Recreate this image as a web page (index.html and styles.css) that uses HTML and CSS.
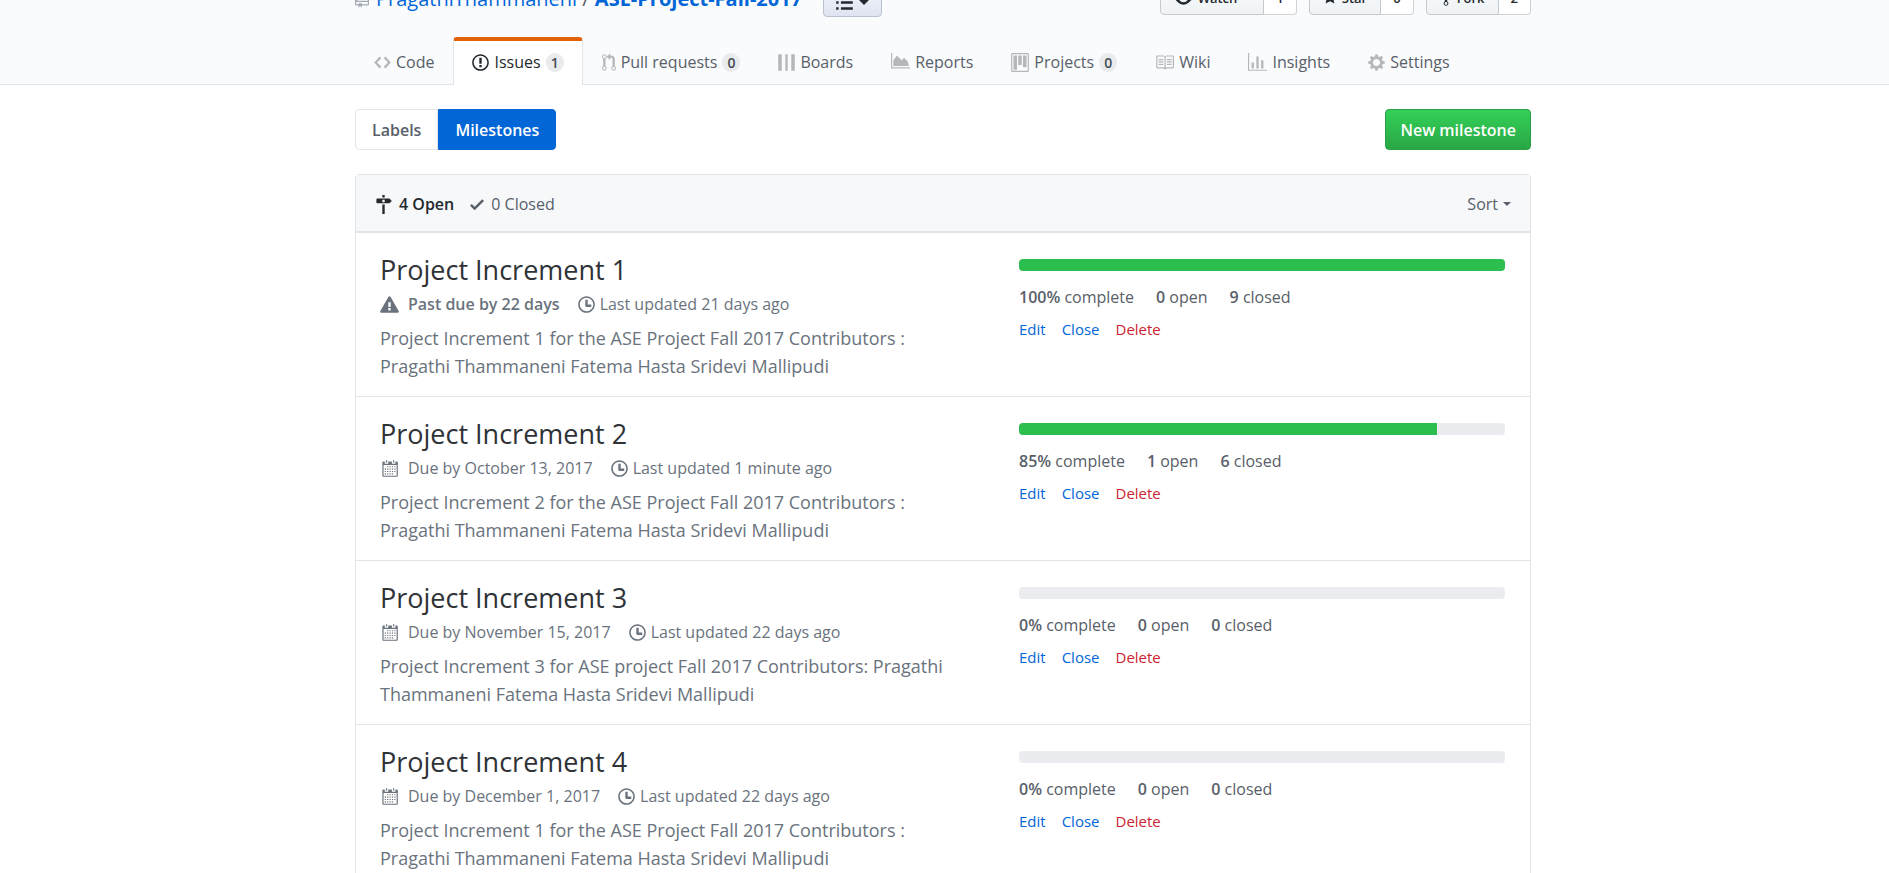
FILE: index.html
```html
<!DOCTYPE html>
<html lang="en">
<head>
<meta charset="utf-8">
<title>Milestones - ASE-Project-Fall-2017</title>
<link rel="stylesheet" href="styles.css">
</head>
<body>
<svg class="sprite" aria-hidden="true">
  <symbol id="repo" viewBox="0 0 12 16"><path fill-rule="evenodd" d="M4 9H3V8h1v1zm0-3H3v1h1V6zm0-2H3v1h1V4zm0-2H3v1h1V2zm8-1v12c0 .55-.45 1-1 1H6v2l-1.500-1.500L3 16v-2H1c-.55 0-1-.45-1-1V1c0-.55.45-1 1-1h10c.55 0 1 .45 1 1zm-1 10H1v2h2v-1h3v1h5v-2zm0-10H2v9h9V1z"/></symbol>
  <symbol id="eye" viewBox="0 0 16 16"><path fill-rule="evenodd" d="M8.060 2C3 2 0 8 0 8s3 6 8.060 6C13 14 16 8 16 8s-3-6-7.940-6zM8 12c-2.200 0-4-1.780-4-4 0-2.200 1.800-4 4-4 2.220 0 4 1.800 4 4 0 2.220-1.780 4-4 4zm2-4c0 1.110-.89 2-2 2-1.110 0-2-.89-2-2 0-1.110.89-2 2-2 1.110 0 2 .89 2 2z"/></symbol>
  <symbol id="star" viewBox="0 0 14 16"><path d="M14 6l-4.900-.64L7 1 4.900 5.360 0 6l3.600 3.260L2.670 14 7 11.670 11.330 14l-.93-4.740L14 6z"/></symbol>
  <symbol id="fork" viewBox="0 0 10 16"><path fill-rule="evenodd" d="M8 1a1.993 1.993 0 0 0-1 3.720V6L5 8 3 6V4.720A1.993 1.993 0 0 0 2 1a1.993 1.993 0 0 0-1 3.720V6.500l3 3v1.780A1.993 1.993 0 0 0 5 15a1.993 1.993 0 0 0 1-3.720V9.500l3-3V4.720A1.993 1.993 0 0 0 8 1zM2 4.200C1.340 4.200.8 3.650.8 3c0-.65.55-1.200 1.200-1.200.65 0 1.200.55 1.200 1.200 0 .65-.55 1.200-1.200 1.200zm3 10c-.66 0-1.200-.55-1.200-1.200 0-.65.55-1.200 1.200-1.200.65 0 1.200.55 1.200 1.200 0 .65-.55 1.200-1.200 1.200zm3-10c-.66 0-1.200-.55-1.200-1.200 0-.65.55-1.200 1.200-1.200.65 0 1.200.55 1.200 1.200 0 .65-.55 1.200-1.200 1.200z"/></symbol>
  <symbol id="list" viewBox="0 0 14 16"><path d="M0 2h2v2H0zm4 0h10v2H4zM0 7h2v2H0zm4 0h10v2H4zM0 12h2v2H0zm4 0h10v2H4z"/></symbol>
  <symbol id="code" viewBox="0 0 14 16"><path d="M9.500 3L8 4.500 11.500 8 8 11.500 9.500 13 14 8 9.500 3zm-5 0L0 8l4.500 5L6 11.500 2.500 8 6 4.500 4.500 3z"/></symbol>
  <symbol id="issue" viewBox="0 0 14 16"><path fill-rule="evenodd" d="M7 2.300c3.140 0 5.700 2.560 5.700 5.700s-2.560 5.700-5.700 5.700A5.710 5.710 0 0 1 1.300 8c0-3.140 2.560-5.700 5.700-5.700zM7 1C3.140 1 0 4.140 0 8s3.140 7 7 7 7-3.140 7-7-3.140-7-7-7zm1 3H6v5h2V4zm0 6H6v2h2v-2z"/></symbol>
  <symbol id="pull" viewBox="0 0 12 16"><path fill-rule="evenodd" d="M11 11.280V5c-.03-.78-.34-1.470-.94-2.060C9.460 2.350 8.780 2.030 8 2H7V0L4 3l3 3V4h1c.27.02.48.11.69.31.21.2.3.42.31.69v6.280A1.993 1.993 0 0 0 10 15a1.993 1.993 0 0 0 1-3.720zm-1 2.920c-.66 0-1.200-.55-1.200-1.200 0-.65.55-1.200 1.200-1.200.65 0 1.200.55 1.200 1.200 0 .65-.55 1.200-1.200 1.200zM4 3c0-1.110-.89-2-2-2a1.993 1.993 0 0 0-1 3.720v6.560A1.993 1.993 0 0 0 2 15a1.993 1.993 0 0 0 1-3.720V4.720c.59-.34 1-.98 1-1.720zm-.8 10c0 .66-.55 1.200-1.200 1.200-.65 0-1.200-.55-1.200-1.200 0-.65.55-1.200 1.200-1.200.65 0 1.200.55 1.200 1.200zM2 4.200C1.340 4.200.8 3.650.8 3c0-.65.55-1.200 1.200-1.200.65 0 1.200.55 1.200 1.200 0 .65-.55 1.200-1.200 1.200z"/></symbol>
  <symbol id="boards" viewBox="0 0 14 16"><path d="M0 1h3v14H0zm6 0h2v14H6zm5 0h3v14h-3z"/></symbol>
  <symbol id="reports" viewBox="0 0 16 16"><path d="M0 0h1v12h15v1H0z"/><path d="M2 11V6l3-4 4 4 2-2 3 3 1 4z"/></symbol>
  <symbol id="project" viewBox="0 0 15 16"><path fill-rule="evenodd" d="M10 12h3V2h-3v10zm-4-2h3V2H6v8zm-4 4h3V2H2v12zm-1 1h13V1H1v14zM14 0H1a1 1 0 0 0-1 1v14a1 1 0 0 0 1 1h13a1 1 0 0 0 1-1V1a1 1 0 0 0-1-1z"/></symbol>
  <symbol id="book" viewBox="0 0 16 16"><path fill-rule="evenodd" d="M3 5h4v1H3V5zm0 3h4V7H3v1zm0 2h4V9H3v1zm11-5h-4v1h4V5zm0 2h-4v1h4V7zm0 2h-4v1h4V9zm2-6v9c0 .55-.45 1-1 1H9.500l-1 1-1-1H2c-.55 0-1-.45-1-1V3c0-.55.45-1 1-1h5.500l1 1 1-1H15c.55 0 1 .45 1 1zm-8 .5L7.500 3H2v9h6V3.500zm7-.5H9.500l-.5.5V12h6V3z"/></symbol>
  <symbol id="graph" viewBox="0 0 16 16"><path d="M16 14v1H0V0h1v14h15zM5 13H3V8h2v5zm4 0H7V3h2v10zm4 0h-2V6h2v7z"/></symbol>
  <symbol id="gear" viewBox="0 0 14 16"><path fill-rule="evenodd" d="M14 8.770v-1.600l-1.940-.64-.45-1.090.88-1.840-1.130-1.130-1.810.91-1.090-.45-.69-1.920h-1.600l-.63 1.940-1.110.45-1.840-.88-1.130 1.130.91 1.810-.45 1.090L0 7.230v1.590l1.940.64.45 1.090-.88 1.840 1.130 1.130 1.810-.91 1.090.45.69 1.920h1.590l.63-1.940 1.110-.45 1.840.88 1.130-1.130-.92-1.810.47-1.090L14 8.750v.02zM7 11c-1.660 0-3-1.340-3-3s1.340-3 3-3 3 1.340 3 3-1.340 3-3 3z"/></symbol>
  <symbol id="milestone" viewBox="0 0 14 16"><path fill-rule="evenodd" d="M8 2H6V0h2v2zm4 5H2c-.55 0-1-.45-1-1V4c0-.55.45-1 1-1h10l2 2-2 2zM8 4H6v2h2V4zM6 16h2V8H6v8z"/></symbol>
  <symbol id="check" viewBox="0 0 12 16"><path d="M12 5l-8 8-4-4 1.500-1.500L4 10l6.500-6.500L12 5z"/></symbol>
  <symbol id="alert" viewBox="0 0 16 16"><path fill-rule="evenodd" d="M8.865 1.520c-.18-.31-.51-.5-.87-.5s-.69.19-.87.5L.275 13.500c-.18.31-.18.69 0 1 .19.31.52.5.87.5h13.700c.36 0 .69-.19.86-.5.17-.31.18-.69.01-1L8.865 1.520zM8.995 13h-2v-2h2v2zm0-3h-2V6h2v4z"/></symbol>
  <symbol id="clock" viewBox="0 0 14 16"><path fill-rule="evenodd" d="M8 8h3v2H7c-.55 0-1-.45-1-1V4h2v4zM7 2.300c3.140 0 5.700 2.560 5.700 5.700s-2.560 5.700-5.700 5.700A5.710 5.710 0 0 1 1.300 8c0-3.140 2.560-5.700 5.700-5.700zM7 1C3.140 1 0 4.140 0 8s3.140 7 7 7 7-3.140 7-7-3.140-7-7-7z"/></symbol>
  <symbol id="calendar" viewBox="0 0 14 16"><path fill-rule="evenodd" d="M13 2h-1v1.500c0 .28-.22.5-.5.5h-2c-.28 0-.5-.22-.5-.5V2H6v1.500c0 .28-.22.5-.5.5h-2c-.28 0-.5-.22-.5-.5V2H2c-.55 0-1 .45-1 1v11c0 .55.45 1 1 1h11c.55 0 1-.45 1-1V3c0-.55-.45-1-1-1zm0 12H2V5h11v9zM5 3H4V1h1v2zm6 0h-1V1h1v2zM6 7H5V6h1v1zm2 0H7V6h1v1zm2 0H9V6h1v1zm2 0h-1V6h1v1zM4 9H3V8h1v1zm2 0H5V8h1v1zm2 0H7V8h1v1zm2 0H9V8h1v1zm2 0h-1V8h1v1zm-8 2H3v-1h1v1zm2 0H5v-1h1v1zm2 0H7v-1h1v1zm2 0H9v-1h1v1zm2 0h-1v-1h1v1zm-8 2H3v-1h1v1zm2 0H5v-1h1v1zm2 0H7v-1h1v1zm2 0H9v-1h1v1z"/></symbol>
</svg>

<header class="pagehead">
  <div class="container repo-row">
    <h1 class="repo-title">
      <svg class="icon w14"><use href="#repo"/></svg>
      <span><a href="#">PragathiThammaneni</a> / <a href="#" class="repo-name">ASE-Project-Fall-2017</a></span>
      <button class="list-button" type="button" aria-label="View options"><svg class="icon w17"><use href="#list"/></svg><span class="caret"></span></button>
    </h1>
    <div class="social">
      <div class="social-group"><button type="button"><svg class="icon w19"><use href="#eye"/></svg>Watch<span class="caret small"></span></button><a href="#">1</a></div>
      <div class="social-group"><button type="button"><svg class="icon w14"><use href="#star"/></svg>Star</button><a href="#">0</a></div>
      <div class="social-group"><button type="button"><svg class="icon w12"><use href="#fork"/></svg>Fork</button><a href="#">2</a></div>
    </div>
  </div>
  <nav class="container tabs">
    <a class="tab" href="#"><svg class="icon w17"><use href="#code"/></svg>Code</a>
    <a class="tab selected" href="#"><svg class="icon w17"><use href="#issue"/></svg>Issues<span class="counter">1</span></a>
    <a class="tab" href="#"><svg class="icon w14"><use href="#pull"/></svg>Pull requests<span class="counter">0</span></a>
    <a class="tab" href="#"><svg class="icon w17"><use href="#boards"/></svg>Boards</a>
    <a class="tab" href="#"><svg class="icon w19"><use href="#reports"/></svg>Reports</a>
    <a class="tab" href="#"><svg class="icon w18"><use href="#project"/></svg>Projects<span class="counter">0</span></a>
    <a class="tab" href="#"><svg class="icon w19"><use href="#book"/></svg>Wiki</a>
    <a class="tab" href="#"><svg class="icon w19"><use href="#graph"/></svg>Insights</a>
    <a class="tab" href="#"><svg class="icon w17"><use href="#gear"/></svg>Settings</a>
  </nav>
</header>

<main>
  <div class="container">
  <div class="subnav">
    <div class="subnav-links"><a href="#">Labels</a><a href="#" class="active">Milestones</a></div>
    <button class="primary" type="button">New milestone</button>
  </div>

  <section class="box">
    <div class="box-head">
      <div class="states">
        <a href="#" class="on"><svg class="icon w17"><use href="#milestone"/></svg>4 Open</a>
        <a href="#"><svg class="icon w14"><use href="#check"/></svg>0 Closed</a>
      </div>
      <button class="sort" type="button">Sort<span class="caret small"></span></button>
    </div>

    <article class="item">
      <div class="info">
        <h2><a href="#">Project Increment 1</a></h2>
        <div class="meta"><span class="due late"><svg class="icon w19"><use href="#alert"/></svg>Past due by 22 days</span><span class="updated"><svg class="icon w17"><use href="#clock"/></svg>Last updated 21 days ago</span></div>
        <p>Project Increment 1 for the ASE Project Fall 2017 Contributors : Pragathi Thammaneni Fatema Hasta Sridevi Mallipudi</p>
      </div>
      <div class="progress">
        <div class="bar"><div class="fill" style="width: 100%"></div></div>
        <div class="stats"><span><b>100%</b> complete</span><span><b>0</b> open</span><span><b>9</b> closed</span></div>
        <div class="actions"><a href="#">Edit</a><button type="button">Close</button><button type="button" class="danger">Delete</button></div>
      </div>
    </article>

    <article class="item">
      <div class="info">
        <h2><a href="#">Project Increment 2</a></h2>
        <div class="meta"><span class="due"><svg class="icon w19"><use href="#calendar"/></svg>Due by October 13, 2017</span><span class="updated"><svg class="icon w17"><use href="#clock"/></svg>Last updated 1 minute ago</span></div>
        <p>Project Increment 2 for the ASE Project Fall 2017 Contributors : Pragathi Thammaneni Fatema Hasta Sridevi Mallipudi</p>
      </div>
      <div class="progress">
        <div class="bar"><div class="fill" style="width: 86%"></div></div>
        <div class="stats"><span><b>85%</b> complete</span><span><b>1</b> open</span><span><b>6</b> closed</span></div>
        <div class="actions"><a href="#">Edit</a><button type="button">Close</button><button type="button" class="danger">Delete</button></div>
      </div>
    </article>

    <article class="item">
      <div class="info">
        <h2><a href="#">Project Increment 3</a></h2>
        <div class="meta"><span class="due"><svg class="icon w19"><use href="#calendar"/></svg>Due by November 15, 2017</span><span class="updated"><svg class="icon w17"><use href="#clock"/></svg>Last updated 22 days ago</span></div>
        <p>Project Increment 3 for ASE project Fall 2017 Contributors: Pragathi Thammaneni Fatema Hasta Sridevi Mallipudi</p>
      </div>
      <div class="progress">
        <div class="bar"><div class="fill" style="width: 0%"></div></div>
        <div class="stats"><span><b>0%</b> complete</span><span><b>0</b> open</span><span><b>0</b> closed</span></div>
        <div class="actions"><a href="#">Edit</a><button type="button">Close</button><button type="button" class="danger">Delete</button></div>
      </div>
    </article>

    <article class="item">
      <div class="info">
        <h2><a href="#">Project Increment 4</a></h2>
        <div class="meta"><span class="due"><svg class="icon w19"><use href="#calendar"/></svg>Due by December 1, 2017</span><span class="updated"><svg class="icon w17"><use href="#clock"/></svg>Last updated 22 days ago</span></div>
        <p>Project Increment 1 for the ASE Project Fall 2017 Contributors : Pragathi Thammaneni Fatema Hasta Sridevi Mallipudi</p>
      </div>
      <div class="progress">
        <div class="bar"><div class="fill" style="width: 0%"></div></div>
        <div class="stats"><span><b>0%</b> complete</span><span><b>0</b> open</span><span><b>0</b> closed</span></div>
        <div class="actions"><a href="#">Edit</a><button type="button">Close</button><button type="button" class="danger">Delete</button></div>
      </div>
    </article>
  </section>
  </div>
</main>
</body>
</html>
```

FILE: styles.css
```css
* { box-sizing: border-box; }
html { overflow: hidden; }
body {
  margin: 0;
  background: #fff;
  color: #24292e;
  font: 16px/24px "Open Sans", "Noto Sans", sans-serif;
}
a { color: #0366d6; text-decoration: none; }
button { font: inherit; cursor: pointer; }
b { font-weight: 600; }
.sprite { display: none; }
.container { width: 100%; max-width: 1176px; margin: 0 auto; }
.pagehead, main { padding-right: 3px; }

.icon { flex: none; height: 19px; fill: currentColor; }
.w12 { width: 12px; }
.w14 { width: 14px; }
.w17 { width: 17px; }
.w18 { width: 18px; }
.w19 { width: 19px; }
.caret {
  display: inline-block;
  border: 5px solid transparent;
  border-top-color: currentColor;
  border-bottom: 0;
}
.caret.small { border-width: 4px; border-bottom: 0; }

/* Repository header */
.pagehead { display: flow-root; background: #fafbfc; border-bottom: 1px solid #e1e4e8; }
.repo-row {
  display: flex;
  justify-content: space-between;
  align-items: flex-start;
  margin-top: -20px;
  margin-bottom: 20px;
}
.repo-title {
  display: flex;
  align-items: center;
  gap: 7px;
  margin: 0;
  font-size: 20px;
  font-weight: 400;
  line-height: 37px;
  color: #586069;
}
.repo-title > .icon { color: #a3aab1; }
.repo-name { font-weight: 700; }
.list-button {
  display: flex;
  align-items: center;
  gap: 6px;
  height: 37px;
  margin-left: 14px;
  padding: 8px 12px 0;
  color: #24292e;
  background: linear-gradient(#f6f8fa, #dfe4f2);
  border: 1px solid #b9c2cf;
  border-radius: 4px;
}
.social { display: flex; gap: 12px; }
.social-group { display: flex; height: 35px; font-size: 13px; font-weight: 600; line-height: 34px; }
.social-group button {
  display: flex;
  align-items: center;
  gap: 5px;
  padding: 0 13px;
  color: #24292e;
  background: linear-gradient(#fafbfc, #eff3f6);
  border: 1px solid #c5c9cc;
  border-radius: 4px 0 0 4px;
}
.social-group a {
  padding: 0 12px;
  color: #24292e;
  background: #fff;
  border: 1px solid #d0d3d6;
  border-left: 0;
  border-radius: 0 4px 4px 0;
}

/* Section tabs */
.tabs { display: flex; margin-bottom: -1px; }
.tab {
  display: flex;
  align-items: center;
  gap: 5px;
  height: 48px;
  padding: 0 18px 2px;
  color: #586069;
  border: 1px solid transparent;
  border-top: 4px solid transparent;
  border-bottom: 0;
  border-radius: 4px 4px 0 0;
}
.tab .icon { color: #b5b8bb; }
.tab.selected { color: #24292e; background: #fff; border-color: #e36209 #e1e4e8 transparent; }
.tab.selected .icon { color: #24292e; }
.counter {
  padding: 0 5px;
  font-size: 14px;
  font-weight: 600;
  line-height: 19px;
  text-align: center;
  color: #444d56;
  background: #e9ebed;
  border-radius: 20px;
}

/* Labels / Milestones switch */
.subnav { display: flex; justify-content: space-between; padding: 24px 0; }
.subnav-links { display: flex; font-weight: 600; line-height: 38px; }
.subnav-links a {
  padding: 1px 16px 0;
  color: #586069;
  border: 1px solid #e1e4e8;
  border-radius: 4px 0 0 4px;
}
.subnav-links .active { color: #fff; background: #0366d6; border-color: #0366d6; border-radius: 0 4px 4px 0; }
.primary {
  height: 41px;
  padding: 0 14px;
  font-weight: 600;
  color: #fff;
  background: linear-gradient(#34d058, #28a745);
  border: 1px solid #2a9f46;
  border-radius: 4px;
}

/* Milestone list */
.box { border: 1px solid #e1e4e8; border-radius: 4px; }
.box-head {
  display: flex;
  justify-content: space-between;
  align-items: center;
  height: 58px;
  padding: 2px 19px 0;
  background: #f6f8fa;
  border-bottom: 2px solid #e1e4e8;
}
.states { display: flex; gap: 16px; }
.states a { display: flex; align-items: center; gap: 7px; color: #586069; }
.states .on { color: #24292e; font-weight: 600; }
.sort { display: flex; align-items: center; gap: 5px; padding: 0; color: #586069; background: none; border: 0; }

.item {
  display: flex;
  justify-content: space-between;
  padding: 18px 25px 16px 24px;
}
.item + .item { border-top: 1px solid #e1e4e8; }
.info { width: 51%; color: #6a737d; }
.info h2 { margin: 0; font-size: 27px; font-weight: 400; line-height: 38px; }
.info h2 a { color: #2f3337; }
.meta { display: flex; gap: 18px; padding-top: 1px; line-height: 28px; }
.due, .updated { display: flex; align-items: center; }
.due { gap: 9px; }
.updated { gap: 5px; }
.late { font-weight: 600; }
.info p { margin: 6px 0 0; font-size: 18px; line-height: 28px; }

.progress { width: 43.2%; padding-top: 8px; }
.bar { height: 12px; overflow: hidden; background: #eaecef; border-radius: 4px; }
.fill { height: 100%; background: #2cbe4e; }
.stats { display: flex; gap: 22px; margin-top: 12px; line-height: 28px; color: #586069; }
.actions { display: flex; gap: 16px; margin-top: 4px; font-size: 15px; line-height: 28px; }
.actions button { padding: 0; color: #0366d6; background: none; border: 0; line-height: 28px; }
.actions .danger { color: #cb2431; }
```
